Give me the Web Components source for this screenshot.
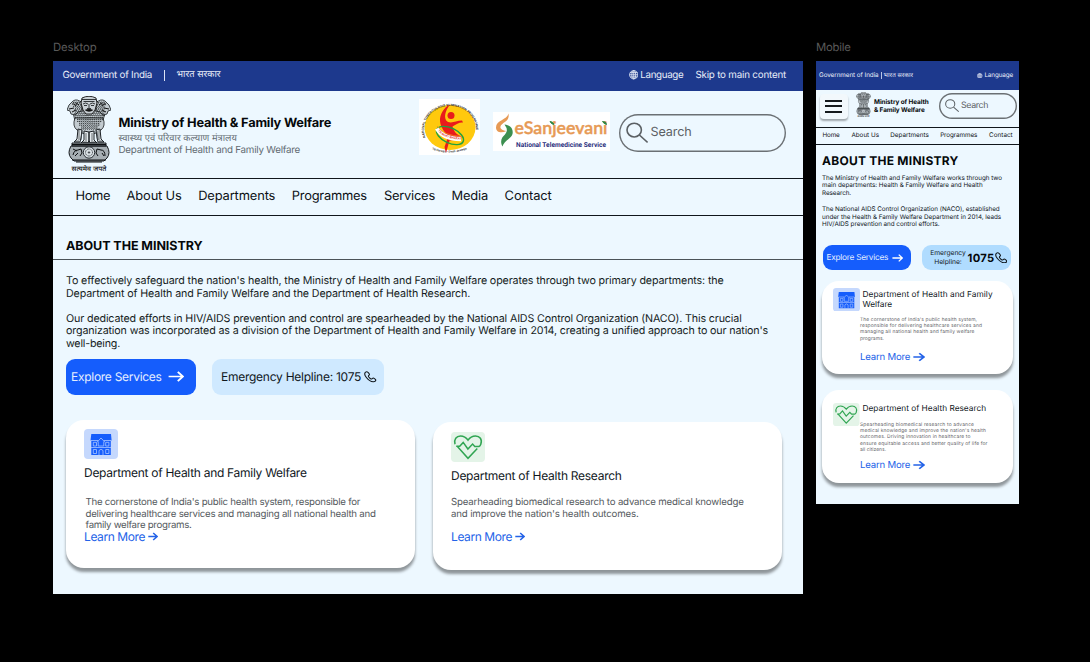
<!DOCTYPE html>
<html lang="en">
<head>
<meta charset="utf-8">
<title>Ministry of Health &amp; Family Welfare</title>
<style>
html,body{margin:0;background:#000;height:662px;overflow:hidden}
body{font-family:Inter,"Noto Sans","Liberation Sans",sans-serif;color:#111820;text-rendering:geometricPrecision}
</style>
</head>
<body>
<design-board></design-board>
<script>
const define = (name, html, setup) => customElements.define(name, class extends HTMLElement {
  connectedCallback() {
    if (this.shadowRoot) return;
    this.attachShadow({mode: 'open'}).innerHTML = typeof html === 'function' ? html(this) : html;
    if (setup) setup(this);
  }
});

/* One line of type: s = size, h = line height, w = measured width */
define('type-line', e => `<style>
:host{display:block;flex:none;width:max-content;white-space:pre;font-size:${e.getAttribute('s')}px;line-height:${e.getAttribute('h')}px;height:${e.getAttribute('h')}px}
</style><slot></slot>`, e => {
  const w = +e.getAttribute('w') - .4;
  const n = [...e.textContent].length;
  const natural = e.getBoundingClientRect().width;
  if (/[\u0900-\u097f]/.test(e.textContent)) e.style.fontSize = (+e.getAttribute('s') * w / natural) + 'px';
  else e.style.letterSpacing = ((w - natural) / n).toFixed(4) + 'px';
});

const icons = {
  globe: ['0 0 20 20', `<g fill="none" stroke="currentColor" stroke-width="1.7"><circle cx="10" cy="10" r="8.8"/><ellipse cx="10" cy="10" rx="4.2" ry="8.8"/><path d="M10 1v18M1 10h18M2.5 5.5h15M2.5 14.5h15"/></g>`],
  search: ['0 0 22 22', `<g fill="none" stroke="currentColor" stroke-width="1.6"><circle cx="8.2" cy="8.4" r="7.2"/><path d="M13.4 13.6 21.6 21.4"/></g>`],
  arrow: ['0 0 16 12', `<path d="M.6 6H15M9.8 1 15 6 9.8 11" fill="none" stroke="currentColor" stroke-width="1.9"/>`],
  arrowsmall: ['0 0 10 10', `<path d="M.3 5H9M5.2 1.2 9.1 5 5.2 8.8" fill="none" stroke="currentColor" stroke-width="1.5"/>`],
  phone: ['0 0 24 24', `<path d="M3 2.5C.8 4.5.8 8.5 4.6 13.700c4.200 5.700 9.200 9 13.400 8.800 2.600-.2 4.600-2.100 4.600-3.700 0-1-3.500-4-5-4-1.300 0-2.400 2.100-3.700 1.900-1.500-.3-5.400-4.300-5.500-5.700C8.300 9.700 10.500 9 10.500 7.500 10.500 6 7.200 1.700 5.700 1.500 4.900 1.400 3.700 1.800 3 2.500Z" fill="none" stroke="currentColor" stroke-width="2.100"/>`],
  clinic: ['0 0 34 30', `<rect width="34" height="30" rx="4" fill="#c5d8fd"/><path d="M7.300 5H27l.6 6.500h-.8V26H7.300V11.500h-.8Z" fill="#155dfc"/><g fill="none" stroke="#a9c5ff" stroke-width=".8"><path d="M7 11.500H14M20 11.500h7M13.200 13 17 9l3.800 4M14.200 12.500V17h5.600v-4.500M7 18.500h20"/><path d="M9.300 13.300h3.200V17H9.300zM21.700 13.300h3.200V17h-3.200zM9.300 20.500h3.200v4H9.300zM21.700 20.500h3.200v4h-3.200zM15 26v-4.500q2-2.500 4 0V26"/></g>`],
  heart: ['0 0 34 30', `<rect width="34" height="30" rx="4" fill="#e4f4e8"/><g fill="none" stroke="#30a552" stroke-width="1.500"><path d="M4 12.200C2.700 7.300 5.400 3.900 9.500 3.900c3.500 0 5.800 1.700 7.500 4.300 1.700-2.600 4-4.300 7.500-4.300 4.300 0 7 3.500 5.300 8.300-.3.900-1 1.900-1.900 2.300h-4.100l-2.200-2.400L16.900 17 12.200 10.400 8.700 14.300H5.200"/><path d="M6.200 14.300 17 26.300 26.300 16.500"/></g>`]
};
define('line-icon', e => {
  const [box, body] = icons[e.getAttribute('name')];
  return `<style>:host{display:block;flex:none}svg{display:block;width:100%;height:100%}</style><svg viewBox="${box}" preserveAspectRatio="none">${body}</svg>`;
});

/* Lion capital: curls for the manes are generated on a small lattice */
const curls = (() => {
  let s = '';
  for (let r = 0; r < 15; r++) {
    const y = 6 + r * 1.9;
    const half = r < 3 ? 16 : r < 8 ? 15 : 14 - (r - 8) * 1.05;
    for (let x = 22 - half + (r % 2) * .9; x < 22 + half; x += 1.9)
      s += `M${x.toFixed(1)} ${y.toFixed(1)}q.8 1.500 1.400-.1`;
  }
  return s;
})();
define('state-emblem', `<style>:host{display:block;flex:none}svg{display:block;width:100%;height:100%}</style>
<svg viewBox="0 0 44 76" font-family="'Noto Sans',sans-serif">
<g stroke="#15191c" stroke-width=".8" fill="#c3cbd0">
<path d="M5 12 8 25 10 33 34 33 36 25 39 12 30 5H14Z"/>
<path d="M15 7Q10 2 6 5L2 9 0 14l3 1 1 3 4 1 3-3 4-1ZM29 7q5-5 9-2l4 4 2 5-3 1-1 3-4 1-3-3-4-1Z"/>
<path d="M8 22Q5 30 10 34l5 3 7 2 7-2 5-3q5-4 2-12Z"/>
</g>
<path d="${curls}" fill="none" stroke="#0c0f11" stroke-width=".85"/>
<g fill="#c9d0d5" stroke="#111" stroke-width=".9"><path d="M15 2q7-3.500 14 0l1 5-2 7-3 4h-6l-3-4-2-7Z"/></g>
<path d="M15 3.500h14M16.500 5.500h11M16 8q2.500-2 5 0M23 8q2.500-2 5 0M17 9.500h3M24 9.500h3M22 8v4M20 12.500h4" fill="none" stroke="#0c0f11" stroke-width=".8"/><path d="M17.500 14q4.500-2 9 0-4.500 3.500-9 0Z" fill="#111"/>
<path d="M5 8q3-1 4 2M39 8q-3-1-4 2M2 13l5-1M42 13l-5-1M9 7l3 2M35 7l-3 2M5 16l4-2M39 16l-4-2" fill="none" stroke="#111" stroke-width="1"/>
<g fill="#e5ebef" stroke="#1b2024" stroke-width="1">
<path d="M11 33 10 43 7 46h6l1-4 1-8ZM33 33l1 10 3 3h-6l-1-4-1-8ZM17 35l0 9-3 3h7l1-3V36ZM27 35v9l3 3h-7l-1-3V36Z"/></g>
<path d="M12 34v10M15 35l-1 9M19 37v8M25 37v8M30 35l1 9M32 34v10M8 45h4M16 46h4M24 46h4M32 45h4" stroke="#30363b" stroke-width=".7"/>
<g fill="#a6aeb3" stroke="#15191c" stroke-width="1"><path d="M5 47h34v3H5zM4 50Q0 57 4 62L7 65H37l3-3q4-5 0-12Z"/></g>
<g fill="#d9e0e4" stroke="#262c31" stroke-width="1"><circle cx="22" cy="56.500" r="5.700"/><circle cx="22" cy="56.500" r="3.500" stroke-dasharray=".8 .6"/><circle cx="22" cy="56.500" r=".7"/></g>
<path d="M6 59q1-5 5-5l3-1 1 4-2 3M6 53l4 2M8 60l3-3M31 60l-2-3 1-4 4 1q4 0 4 6M35 57l2 3M5 64h34M9 66h26M5 48.500h34" fill="none" stroke="#0c0f11" stroke-width="1"/>
<text x="22" y="74.500" font-size="6.700" textLength="35" lengthAdjust="spacingAndGlyphs" text-anchor="middle" font-weight="500" fill="#111">सत्यमेव जपते</text>
</svg>`);

define('tb-logo', `<style>:host{display:block;flex:none;width:61px;height:56px}svg{display:block;overflow:visible}</style>
<svg width="61" height="56" viewBox="0 0 61 56" font-family="'Liberation Sans'">
<defs><path id="ring" d="M6.500 38.500A26 23.600 0 1 1 55.500 38.500"/><path id="foot" d="M11 49.500Q31 58 52 48.500"/><path id="band" d="M18.500 31q6 9.500 24 9.500"/></defs>
<rect width="61" height="56" fill="#fff"/><ellipse cx="31" cy="28.500" rx="25.500" ry="22.500" fill="#ffc90d"/>
<text font-size="3.200" font-weight="700" fill="#1c1c1c"><textPath href="#ring">NATIONAL TUBERCULOSIS ELIMINATION PROGRAMME</textPath></text>
<text font-size="2.900" font-weight="700" fill="#333"><textPath href="#foot" startOffset="2">TB Harega - Desh Jeetega</textPath></text>
<circle cx="32" cy="16.500" r="3.500" fill="#e91b1b"/>
<path d="M31 5.500C25 8 20.500 16 21 22c.5 7 5 11 8 16L25.500 48l1.500 6 3.500-12.500c5 0 9-1.500 13-4-6-1-9-6-10-10 4-2.500 7-4.500 10.500-4l-1-2c-6 0-9 3-14 1.500-5-3-3-11 2-17.500Z" fill="#e91b1b"/>
<g fill="none"><ellipse cx="31" cy="36.500" rx="14.500" ry="7.500" stroke="#20a23e" stroke-width="1.400" transform="rotate(25 31 36.500)"/><path d="M18 29.500q6 10.500 24 10.500" stroke="#fff" stroke-width="4.500"/><path d="M18 27q7 10 25 10.500" stroke="#f58b20" stroke-width=".8"/></g>
<text font-size="2.900" font-weight="700" fill="#e03131"><textPath href="#band" startOffset="1">TB MUKT BHARAT</textPath></text>
</svg>`);
define('sanjeevani-logo', `<style>:host{display:block;flex:none;width:117px;height:39px}svg{display:block}</style>
<svg width="117" height="39" viewBox="0 0 117 39">
<rect width="117" height="39" fill="#fff"/>
<path d="M15.500 1.500C14 8 3 8 3 15.500 3.200 21 9 21 13.500 19 9 18.500 6 16.500 8 13.300 10.500 10 17 9 15.500 1.500Z" fill="#e79a55"/>
<path d="M11.500 12.500C18 13 20.500 17.500 19.500 22c-1.500 5-7.500 6-10 12.500C6.500 29 9 25 12 22.500Q16 18.500 11.500 12.500Z" fill="#3c8f50"/>
<text x="21.500" y="22" font-family="Lato,'Open Sans',sans-serif" font-size="17.500" font-weight="600" fill="#e79a55" textLength="93" lengthAdjust="spacingAndGlyphs" stroke="#e79a55" stroke-width=".4">eSanjeevani</text>
<path d="M57 9.500q3 0 4 3Q58 12 57 9.500ZM109.500 9.500q4 0 4 3Q111 12 109.500 9.500Z" fill="#2f8544" stroke="#2f8544"/>
<text x="23" y="34.500" font-family="Roboto,sans-serif" font-size="6.800" font-weight="700" fill="#2b2f7d" textLength="90" lengthAdjust="spacingAndGlyphs">National Telemedicine Service</text>
</svg>`);

define('utility-bar', `<style>:host{display:flex;align-items:center;background:#1d398d;color:#e9eef9;box-sizing:border-box}</style><slot></slot>`);
define('nav-bar', `<style>:host{display:flex;align-items:center;box-sizing:border-box;border-top:1px solid #10161b;border-bottom:1px solid #10161b;color:#0d1216}</style><slot></slot>`);
define('search-field', `<style>:host{display:flex;align-items:center;box-sizing:border-box;flex:none;border:0 solid;border-radius:30px;color:#5b6064;box-shadow:inset 0 0 0 1.400px #6b7074}</style><slot></slot>`);
define('pill-box', `<style>:host{display:flex;align-items:center;box-sizing:border-box;flex:none}</style><slot></slot>`);
define('menu-button', `<style>:host{display:flex;flex-direction:column;gap:3.600px;box-sizing:border-box;flex:none;width:28px;height:25px;padding:6px 5.500px;border-radius:4px;background:#f2f8fc;box-shadow:0 2px 2px #0005}i{height:1.900px;background:#15191c;flex:none}</style><i></i><i></i><i></i>`);
define('info-card', `<style>:host{display:block;box-sizing:border-box;flex:none;background:#fff;box-shadow:0 4px 3px rgba(0,0,0,.4)}</style><slot></slot>`);

define('desktop-page', `<style>
:host{display:flex;flex-direction:column;width:749.500px;height:533px;background:#edf8ff;overflow:hidden}
.head{display:flex;height:87px;align-items:flex-start;flex:none}
.title{display:flex;flex-direction:column;margin:24.600px 0 0 7.500px;width:300.500px}
.about{height:20px;border-bottom:1px solid #4b5358;padding:23px 0 0 13px;flex:none}
.about type-line{margin-top:.3px}
.copy{padding:15.200px 0 0 13px;color:#151c22}
.acts{display:flex;gap:16px;padding:8.800px 0 0 13px}
.cards{display:flex;gap:18.500px;padding:25px 0 0 13px;align-items:flex-start}
info-card{width:348.500px;border-radius:18px;padding-left:18px}
.d{color:#555a5e}.l{display:flex;align-items:center;gap:3px;color:#2463e8}
</style>
<utility-bar style="height:30px;padding:0 16.500px 1.500px 9.500px;flex:none">
<type-line s="9.800" h="13" w="90">Government of India</type-line><span style="width:1px;height:11px;background:#dbe3f6;margin:0 12px 0 11.500px"></span><type-line s="9.500" h="12" w="44.500">भारत सरकार</type-line>
<line-icon name="globe" style="width:9.500px;height:9.500px;margin:0 2px 0 auto"></line-icon><type-line s="9.800" h="13" w="43.500">Language</type-line><type-line s="9.800" h="13" w="91" style="margin-left:12px">Skip to main content</type-line>
</utility-bar>
<div class="head"><state-emblem style="width:44px;height:76px;margin:5px 0 0 14px"></state-emblem>
<div class="title"><type-line s="12.800" h="16" w="213" style="font-weight:700;color:#05080a">Ministry of Health &amp; Family Welfare</type-line><type-line s="9.500" h="14" w="119" style="color:#626b72">स्वास्थ्य एवं परिवार कल्याण मंत्रालय</type-line><type-line s="9.800" h="9" w="182" style="color:#626b72">Department of Health and Family Welfare</type-line></div>
<tb-logo style="margin:8px 0 0 0"></tb-logo><sanjeevani-logo style="margin:21px 9px 0 13px"></sanjeevani-logo>
<search-field style="width:167.400px;height:38px;margin-top:23px;padding-left:7px"><line-icon name="search" style="width:22px;height:21px;margin-right:2.500px"></line-icon><type-line s="12.600" h="16" w="41.500" style="margin-top:1px">Search</type-line></search-field></div>
<nav-bar style="height:38px;padding:1px 0 0 22.500px;flex:none">
<type-line s="12.900" h="16" w="35">Home</type-line><type-line s="12.900" h="16" w="55.500" style="margin-left:16.500px">About Us</type-line><type-line s="12.900" h="16" w="77.500" style="margin-left:16.500px">Departments</type-line><type-line s="12.900" h="16" w="75.500" style="margin-left:16.500px">Programmes</type-line><type-line s="12.900" h="16" w="51.500" style="margin-left:17px">Services</type-line><type-line s="12.900" h="16" w="37" style="margin-left:16.500px">Media</type-line><type-line s="12.900" h="16" w="47.500" style="margin-left:16.500px">Contact</type-line>
</nav-bar>
<div class="about"><type-line s="12.500" h="16" w="137" style="font-weight:700;color:#05080a">ABOUT THE MINISTRY</type-line></div>
<div class="copy"><type-line s="10.700" h="12.500" w="658">To effectively safeguard the nation's health, the Ministry of Health and Family Welfare operates through two primary departments: the</type-line><type-line s="10.700" h="12.500" w="404.500">Department of Health and Family Welfare and the Department of Health Research.</type-line><type-line s="10.700" h="12.500" w="676" style="margin-top:12.500px">Our dedicated efforts in HIV/AIDS prevention and control are spearheaded by the National AIDS Control Organization (NACO). This crucial</type-line><type-line s="10.700" h="12.500" w="702.500">organization was incorporated as a division of the Department of Health and Family Welfare in 2014, creating a unified approach to our nation's</type-line><type-line s="10.700" h="12.500" w="54.500">well-being.</type-line></div>
<div class="acts"><pill-box style="width:129.500px;height:36px;border-radius:9px;background:#155dfc;color:#e4edff;padding-left:5px"><type-line s="12" h="16" w="91">Explore Services</type-line><line-icon name="arrow" style="width:16px;height:11px;margin-left:6.500px;color:#fff"></line-icon></pill-box>
<pill-box style="width:172.500px;height:36px;border-radius:9px;background:#cfe9ff;padding-left:9.500px"><type-line s="12" h="16" w="140.500">Emergency Helpline: 1075</type-line><line-icon name="phone" style="width:12.500px;height:11.500px;margin-left:3px"></line-icon></pill-box></div>
<div class="cards"><info-card style="height:148px;padding-top:9px"><line-icon name="clinic" style="width:34px;height:30px"></line-icon><type-line s="12" h="16" w="223" style="margin-top:6px">Department of Health and Family Welfare</type-line>
<div class="d" style="margin:16.300px 0 0 1.500px"><type-line s="9.700" h="11.500" w="275">The cornerstone of India's public health system, responsible for</type-line><type-line s="9.700" h="11.500" w="290.500">delivering healthcare services and managing all national health and</type-line><type-line s="9.700" h="11.500" w="106.500">family welfare programs.</type-line></div>
<div class="l" style="margin-top:-2.800px"><type-line s="12" h="16" w="61.500">Learn More</type-line><line-icon name="arrowsmall" style="width:10px;height:9px"></line-icon></div></info-card>
<info-card style="height:148px;margin-top:2px;padding-top:10.300px"><line-icon name="heart" style="width:34px;height:30px"></line-icon><type-line s="12" h="16" w="171" style="margin-top:5.500px">Department of Health Research</type-line>
<div class="d" style="margin-top:13.500px"><type-line s="9.700" h="11.500" w="293">Spearheading biomedical research to advance medical knowledge</type-line><type-line s="9.700" h="11.500" w="188">and improve the nation's health outcomes.</type-line></div>
<div class="l" style="margin-top:8.500px"><type-line s="12" h="16" w="61.500">Learn More</type-line><line-icon name="arrowsmall" style="width:10px;height:9px"></line-icon></div></info-card></div>`);

define('mobile-page', `<style>
:host{display:flex;flex-direction:column;width:203px;height:443px;background:#edf8ff;overflow:hidden}
.head{display:flex;height:37px;align-items:flex-start;flex:none}
.copy{padding:5.200px 0 0 6px}
.acts{display:flex;gap:11px;padding:15.900px 0 0 7px}
info-card{width:191px;border-radius:17px;margin-left:6px;padding-left:11px;display:flex;align-items:flex-start}
.d{color:#5f6468;margin-left:-2.500px}.l{display:flex;align-items:center;gap:3px;color:#2463e8;margin-left:-2.500px}
</style>
<utility-bar style="height:29px;padding:0 6px 0 3px;flex:none"><type-line s="6.300" h="8" w="60">Government of India</type-line><span style="width:1px;height:7px;background:#b9c5e4;margin:0 2px"></span><type-line s="6.300" h="8" w="30">भारत सरकार</type-line><line-icon name="globe" style="width:5.500px;height:5.500px;margin:0 1.500px 0 auto"></line-icon><type-line s="6.300" h="8" w="29">Language</type-line></utility-bar>
<div class="head"><menu-button style="margin:4px 8px 0 3.500px"></menu-button><state-emblem style="width:15px;height:26px;margin-top:2px"></state-emblem>
<div style="margin:8.500px 0 0 3.500px;width:65px;font-weight:700;color:#05080a"><type-line s="6.400" h="8" w="55">Ministry of Health</type-line><type-line s="6.400" h="8" w="51">&amp; Family Welfare</type-line></div>
<search-field style="width:78px;height:26px;margin-top:3px;padding-left:6px"><line-icon name="search" style="width:14px;height:13px;margin-right:2px"></line-icon><type-line s="8.800" h="12" w="27.500">Search</type-line></search-field></div>
<nav-bar style="height:18px;padding-left:6.500px;flex:none"><type-line s="6.300" h="9" w="17.500">Home</type-line><type-line s="6.300" h="9" w="28" style="margin-left:11.800px">About Us</type-line><type-line s="6.300" h="9" w="39" style="margin-left:11.300px">Departments</type-line><type-line s="6.300" h="9" w="37.500" style="margin-left:11.300px">Programmes</type-line><type-line s="6.300" h="9" w="24" style="margin-left:11.800px">Contact</type-line></nav-bar>
<type-line s="12" h="16" w="137" style="font-weight:700;color:#05080a;margin:8.500px 0 0 6px">ABOUT THE MINISTRY</type-line>
<div class="copy"><type-line s="6.300" h="7.800" w="180.500">The Ministry of Health and Family Welfare works through two</type-line><type-line s="6.300" h="7.800" w="161">main departments: Health &amp; Family Welfare and Health</type-line><type-line s="6.300" h="7.800" w="29.500">Research.</type-line><type-line s="6.300" h="7.800" w="178" style="margin-top:7.800px">The National AIDS Control Organization (NACO), established</type-line><type-line s="6.300" h="7.800" w="179.500">under the Health &amp; Family Welfare Department in 2014, leads</type-line><type-line s="6.300" h="7.800" w="118">HIV/AIDS prevention and control efforts.</type-line></div>
<div class="acts"><pill-box style="width:88px;height:25px;border-radius:9px;background:#155dfc;color:#e4edff;padding-left:3.500px"><type-line s="8.300" h="12" w="62">Explore Services</type-line><line-icon name="arrow" style="width:11px;height:8px;margin-left:3.500px;color:#fff"></line-icon></pill-box>
<pill-box style="width:88.500px;height:25px;border-radius:9px;background:#b0dcff;padding-left:7.500px"><div style="width:38px;display:flex;flex-direction:column;align-items:center;padding-right:1px;box-sizing:border-box"><type-line s="6.700" h="8.300" w="36">Emergency</type-line><type-line s="6.700" h="8.300" w="28">Helpline:</type-line></div><type-line s="11.200" h="14" w="27.500" style="font-weight:700;color:#05080a">1075</type-line><line-icon name="phone" style="width:12.500px;height:11.500px"></line-icon></pill-box></div>
<info-card style="height:93px;margin-top:10.500px;padding-top:7px;flex:none"><line-icon name="clinic" style="width:27px;height:23.500px"></line-icon><div style="margin:3.400px 0 0 2.500px"><type-line s="8.300" h="9.500" w="130.500">Department of Health and Family</type-line><type-line s="8.300" h="9.500" w="30">Welfare</type-line>
<div class="d" style="margin-top:6.600px"><type-line s="4.900" h="6.300" w="117.500">The cornerstone of India's public health system,</type-line><type-line s="4.900" h="6.300" w="122.500">responsible for delivering healthcare services and</type-line><type-line s="4.900" h="6.300" w="115">managing all national health and family welfare</type-line><type-line s="4.900" h="6.300" w="24.500">programs.</type-line></div><div class="l" style="margin-top:9px"><type-line s="9.600" h="13" w="50.500">Learn More</type-line><line-icon name="arrowsmall" style="width:12px;height:10px"></line-icon></div></div></info-card>
<info-card style="height:93px;margin-top:16px;padding-top:13.500px;flex:none"><line-icon name="heart" style="width:26.500px;height:23px"></line-icon><div style="margin:1.400px 0 0 3px"><type-line s="8.300" h="9.500" w="124">Department of Health Research</type-line>
<div class="d" style="margin-top:7.600px"><type-line s="4.900" h="6.300" w="114.500">Spearheading biomedical research to advance</type-line><type-line s="4.900" h="6.300" w="126.500">medical knowledge and improve the nation's health</type-line><type-line s="4.900" h="6.300" w="111">outcomes. Driving innovation in healthcare to</type-line><type-line s="4.900" h="6.300" w="128">ensure equitable access and better quality of life for</type-line><type-line s="4.900" h="6.300" w="26.500">all citizens.</type-line></div><div class="l" style="margin-top:5.500px"><type-line s="9.600" h="13" w="50.500">Learn More</type-line><line-icon name="arrowsmall" style="width:12px;height:10px"></line-icon></div></div></info-card>`);

define('design-board', `<style>:host{display:flex;align-items:flex-start;gap:13.500px;padding:39.200px 0 0 53px;color:#10171c}section>type-line{color:#5a5a5a;margin-bottom:5.800px}</style>
<section><type-line s="11.300" h="16" w="44">Desktop</type-line><desktop-page></desktop-page></section>
<section><type-line s="11.300" h="16" w="35">Mobile</type-line><mobile-page></mobile-page></section>`);
</script>
</body>
</html>
